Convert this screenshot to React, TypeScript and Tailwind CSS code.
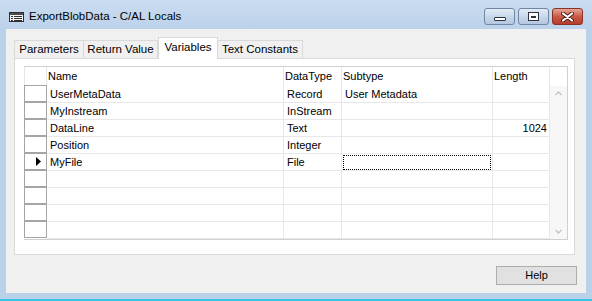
import React from 'react';

type Row = { name: string; type: string; sub: string; len: string; current?: boolean };

const rows: Row[] = [
  { name: 'UserMetaData', type: 'Record', sub: 'User Metadata', len: '' },
  { name: 'MyInstream', type: 'InStream', sub: '', len: '' },
  { name: 'DataLine', type: 'Text', sub: '', len: '1024' },
  { name: 'Position', type: 'Integer', sub: '', len: '' },
  { name: 'MyFile', type: 'File', sub: '', len: '', current: true },
  { name: '', type: '', sub: '', len: '' },
  { name: '', type: '', sub: '', len: '' },
  { name: '', type: '', sub: '', len: '' },
  { name: '', type: '', sub: '', len: '' },
];

const tabs = [
  { label: 'Parameters', w: 'w-[70px]' },
  { label: 'Return Value', w: 'w-[75px]' },
  { label: 'Variables', w: 'w-[60px]', active: true },
  { label: 'Text Constants', w: 'w-[86px]' },
];

function TableIcon() {
  return (
    <svg width="15" height="10" viewBox="0 0 15 10">
      <rect x="0.5" y="0.5" width="14" height="9" fill="#f4f4f4" stroke="#2f2f2f" />
      <rect x="1" y="1" width="13" height="2" fill="#4d4d4d" />
      <rect x="2" y="4" width="2" height="1" fill="#333" />
      <rect x="5" y="4" width="8" height="1" fill="#333" />
      <rect x="2" y="6" width="2" height="1" fill="#333" />
      <rect x="5" y="6" width="8" height="1" fill="#333" />
      <rect x="2" y="8" width="2" height="1" fill="#333" />
      <rect x="5" y="8" width="8" height="1" fill="#333" />
    </svg>
  );
}

function CaptionButtons() {
  return (
    <div className="flex gap-[3px] pt-[8px] pr-[9px] self-start">
      <div className="w-[31px] h-[17px] rounded-[3px] border border-[#6f86a5] bg-gradient-to-b from-[#e4ecf6] via-[#c9d8ea] to-[#b3c7e0] flex items-end justify-center pb-[3px]">
        <div className="w-[12px] h-[4px] rounded-[1px] border border-[#2d3440] bg-white" />
      </div>
      <div className="w-[31px] h-[17px] rounded-[3px] border border-[#6f86a5] bg-gradient-to-b from-[#e4ecf6] via-[#c9d8ea] to-[#b3c7e0] flex items-center justify-center">
        <div className="w-[11px] h-[9px] border border-[#2d3440] bg-white flex items-center justify-center">
          <div className="w-[5px] h-[2px] bg-[#2d3440]" />
        </div>
      </div>
      <div className="w-[31px] h-[17px] rounded-[3px] border border-[#8a3226] bg-gradient-to-b from-[#e8a597] via-[#c95a47] to-[#b83c2a] flex items-center justify-center">
        <svg width="13" height="10" viewBox="0 0 13 10">
          <path d="M2 1.5 L11 8.5 M11 1.5 L2 8.5" stroke="#4a1a14" strokeWidth="4" strokeLinecap="round" />
          <path d="M2 1.5 L11 8.5 M11 1.5 L2 8.5" stroke="#ffffff" strokeWidth="2.2" strokeLinecap="round" />
        </svg>
      </div>
    </div>
  );
}

function RowMarker() {
  return (
    <svg width="5" height="9" viewBox="0 0 5 9">
      <polygon points="0,0 5,4.5 0,9" fill="#000" />
    </svg>
  );
}

function Grid() {
  return (
    <div className="w-[544px] flex flex-col border-t border-r border-b border-[#d0d0d0] bg-white">
      {/* header */}
      <div className="flex h-[19px] items-center">
        <div className="w-[23px] h-full border-l border-r border-[#e6e6e6]" />
        <div className="w-[237px] h-full pl-[1px] flex items-center border-r border-[#e6e6e6]">Name</div>
        <div className="w-[58px] h-full pl-[1px] flex items-center border-r border-[#e6e6e6]">DataType</div>
        <div className="w-[151px] h-full pl-[1px] flex items-center border-r border-[#e6e6e6]">Subtype</div>
        <div className="w-[57px] h-full pl-[1px] flex items-center border-r border-[#e6e6e6]">Length</div>
        <div className="w-[17px] h-full" />
      </div>
      <div className="flex">
        <div className="flex flex-col">
          {rows.map((r, i) => (
            <div key={i} className="flex h-[17px]">
              <div className="w-[23px] h-full border border-[#a5a5a5] -mt-[1px] h-[18px] bg-white flex items-center justify-end pr-[5px]">
                {r.current && <RowMarker />}
              </div>
              <div className="w-[237px] h-full pl-[3px] flex items-center border-b border-r border-[#e8e8e8]">{r.name}</div>
              <div className="w-[58px] h-full pl-[3px] flex items-center border-b border-r border-[#e8e8e8]">{r.type}</div>
              <div className="w-[151px] h-full flex items-center border-b border-r border-[#e8e8e8]">
                {r.current ? (
                  <div className="mx-[1px] my-[1px] h-[15px] flex-1 border border-dotted border-black" />
                ) : (
                  <span className="pl-[3px]">{r.sub}</span>
                )}
              </div>
              <div className="w-[57px] h-full pr-[2px] flex items-center justify-end border-b border-r border-[#e8e8e8]">{r.len}</div>
            </div>
          ))}
        </div>
        {/* scrollbar */}
        <div className="w-[17px] bg-[#f7f7f7] flex flex-col items-center justify-between py-[5px]">
          <svg width="7" height="5" viewBox="0 0 7 5">
            <path d="M0.5 4 L3.5 1 L6.5 4" stroke="#c4c4c4" strokeWidth="1.4" fill="none" />
          </svg>
          <svg width="7" height="5" viewBox="0 0 7 5">
            <path d="M0.5 1 L3.5 4 L6.5 1" stroke="#c4c4c4" strokeWidth="1.4" fill="none" />
          </svg>
        </div>
      </div>
    </div>
  );
}

export default function App() {
  return (
    <div className="w-[592px] h-[301px] flex flex-col bg-[#bad1ea] text-[11px] text-black font-['Liberation_Sans',Arial,sans-serif] overflow-hidden">
      {/* title bar */}
      <div className="h-[29px] flex bg-gradient-to-b from-[#cadcf0] to-[#bcd2eb]">
        <div className="flex-1 flex items-center pl-[9px] gap-[5px] pt-[5px]">
          <TableIcon />
          <span className="text-[11.5px]">ExportBlobData - C/AL Locals</span>
        </div>
        <CaptionButtons />
      </div>

      {/* client area */}
      <div className="mx-[6px] h-[264px] bg-[#f0f0f0] flex flex-col px-[8px] pt-[8px]">
        <div className="flex items-end h-[21px]">
          {tabs.map((t) =>
            t.active ? (
              <div
                key={t.label}
                className={`${t.w} h-[22px] -mb-[1px] relative z-10 bg-white border border-b-0 border-[#d9d9d9] flex items-center justify-center pb-[1px] text-[11.5px]`}
              >
                {t.label}
              </div>
            ) : (
              <div
                key={t.label}
                className={`${t.w} h-[18px] bg-[#f0f0f0] border border-b-0 border-[#d9d9d9] -ml-[1px] first:ml-0 flex items-center justify-center text-[11.5px]`}
              >
                {t.label}
              </div>
            )
          )}
        </div>
        <div className="w-[561px] h-[197px] bg-white border border-[#d9d9d9] pl-[9px] pt-[7px]">
          <Grid />
        </div>
        <div className="flex justify-end pr-[1px] pt-[11px]">
          <div className="w-[81px] h-[19px] bg-[#e1e1e1] border border-[#adadad] flex items-center justify-center">Help</div>
        </div>
      </div>

      {/* bottom frame */}
      <div className="flex-1 flex flex-col justify-end">
        <div className="h-[2px] bg-[#35c3e8]" />
      </div>
    </div>
  );
}
